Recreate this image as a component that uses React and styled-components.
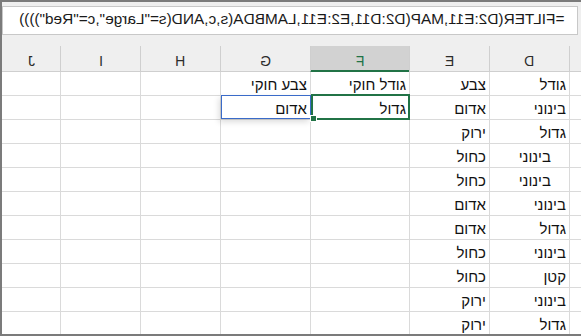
import React from "react";
import styled, { createGlobalStyle } from "styled-components";

const GlobalStyle = createGlobalStyle`
  body {
    margin: 0;
    background: #ffffff;
  }
`;

const GREEN = "#217346";
const GRID = "#dadada";

const Sheet = styled.div`
  width: 581px;
  height: 336px;
  box-sizing: border-box;
  border-top: 2px solid #7b7b7b;
  border-left: 2px solid #7b7b7b;
  border-bottom: 2px solid #7b7b7b;
  background: #efefef;
  overflow: hidden;
  font-family: "Liberation Sans", Arial, sans-serif;
`;

const FormulaArea = styled.div`
  height: 44px;
  box-sizing: border-box;
  padding: 4px 3px 0 0;
`;

const FormulaBox = styled.div`
  height: 29px;
  box-sizing: border-box;
  border: 1px solid #c8c8c8;
  background: #fff;
  display: flex;
  justify-content: flex-end;
  padding: 0 13px 2px 0;
  overflow: hidden;
  font-size: 15.4px;
  line-height: 24px;
  color: #1a1a1a;
  white-space: nowrap;
`;

// the reference shows latin text flipped horizontally
const Mirror = styled.span`
  display: inline-block;
  transform: scaleX(-1);
`;

const Grid = styled.div`
  direction: rtl;
  display: grid;
  grid-template-columns: 12px 80px 80px 99px 90px 80px 80px 58px;
  grid-template-rows: 26px repeat(11, 24px);
  background: #fff;
`;

const HeaderCell = styled.div`
  box-sizing: border-box;
  background: ${(p) => (p.$active ? "#d2d2d2" : "#efefef")};
  border-left: ${(p) => (p.$last ? "none" : "1px solid #cfcfcf")};
  border-bottom: 1px solid ${(p) => (p.$active ? GREEN : "#cfcfcf")};
  box-shadow: ${(p) => (p.$active ? `inset 0 -1px 0 ${GREEN}` : "none")};
  text-align: center;
  font-size: 14px;
  line-height: 18px;
  padding-top: 6px;
  color: ${(p) => (p.$active ? GREEN : "#2b2b2b")};
`;

const Cell = styled.div`
  position: relative;
  box-sizing: border-box;
  border-left: ${(p) => (p.$last ? "none" : `1px solid ${GRID}`)};
  border-bottom: 1px solid ${GRID};
  background: #fff;
  text-align: right;
  padding: 2px ${(p) => (p.$indent ? 18 : 3)}px 0 0;
  font-size: 15px;
  line-height: 21px;
  color: #111;
  white-space: nowrap;
`;

const ActiveFrame = styled.div`
  position: absolute;
  top: -2px;
  right: -1px;
  bottom: -1px;
  left: 0;
  border: 2px solid ${GREEN};
  z-index: 3;
  pointer-events: none;
`;

const FillHandle = styled.div`
  position: absolute;
  left: -3px;
  bottom: -4px;
  width: 5px;
  height: 5px;
  background: ${GREEN};
  border: 1px solid #fff;
  z-index: 4;
`;

const RangeFrame = styled.div`
  position: absolute;
  top: -1px;
  right: -1px;
  bottom: 0;
  left: 0;
  border: 1px solid #3a6bc9;
  box-shadow: -2px 3px 6px rgba(0, 0, 0, 0.14);
  z-index: 2;
  pointer-events: none;
`;

const columns = ["", "D", "E", "F", "G", "H", "I", "J"];

const rows = [
  ["גודל", "צבע", "גודל חוקי", "צבע חוקי"],
  ["בינוני", "אדום", "גדול", "אדום"],
  ["גדול", "ירוק"],
  ["בינוני", "כחול"],
  ["בינוני", "כחול"],
  ["בינוני", "אדום"],
  ["גדול", "אדום"],
  ["בינוני", "כחול"],
  ["קטן", "כחול"],
  ["בינוני", "ירוק"],
  ["גדול", "ירוק"],
];

const indented = [3, 4];

export default function App() {
  return (
    <>
      <GlobalStyle />
      <Sheet>
        <FormulaArea>
          <FormulaBox>
            <Mirror>
              {'=FILTER(D2:E11,MAP(D2:D11,E2:E11,LAMBDA(s,c,AND(s="Large",c="Red"))))'}
            </Mirror>
          </FormulaBox>
        </FormulaArea>
        <Grid>
          {columns.map((c, i) => (
            <HeaderCell key={"h" + i} $active={c === "F"} $last={i === columns.length - 1}>
              <Mirror>{c}</Mirror>
            </HeaderCell>
          ))}
          {rows.map((r, ri) =>
            columns.map((c, ci) => {
              const text = ci > 0 ? r[ci - 1] : "";
              const active = ri === 1 && c === "F";
              const inRange = ri === 1 && c === "G";
              return (
                <Cell
                  key={ri + "-" + ci}
                  $last={ci === columns.length - 1}
                  $indent={c === "D" && indented.includes(ri)}
                >
                  {text}
                  {active && (
                    <ActiveFrame>
                      <FillHandle />
                    </ActiveFrame>
                  )}
                  {inRange && <RangeFrame />}
                </Cell>
              );
            })
          )}
        </Grid>
      </Sheet>
    </>
  );
}
